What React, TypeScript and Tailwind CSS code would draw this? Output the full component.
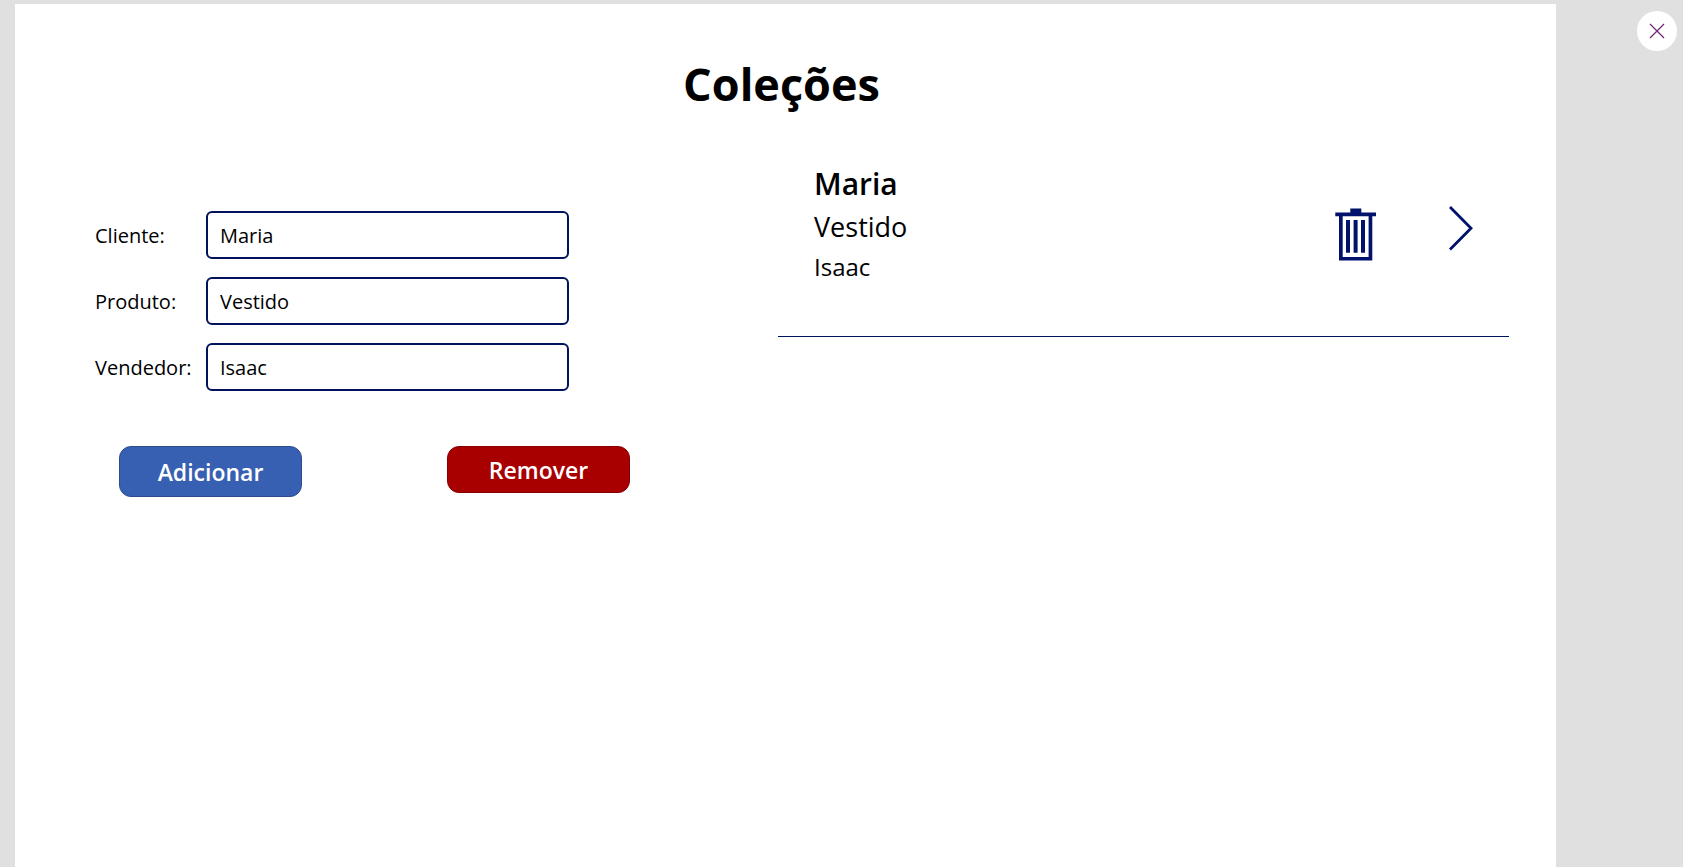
import { useState } from "react";

const fields = [
  { id: "cliente", label: "Cliente:", value: "Maria" },
  { id: "produto", label: "Produto:", value: "Vestido" },
  { id: "vendedor", label: "Vendedor:", value: "Isaac" },
];

const colecoes = [{ cliente: "Maria", produto: "Vestido", vendedor: "Isaac" }];

function TrashIcon() {
  return (
    <svg width="42" height="60" viewBox="0 0 42 60" fill="#00126b" aria-hidden="true">
      <path d="M15.3 4.6H26.3V8.4H41V12.2H37.3V56.6H4V12.2H0.3V8.4H15.3ZM7.7 12.2V53H33.6V12.2Z" fillRule="evenodd" />
      <path d="M11 16H15V48.8H11ZM18.6 16H22.6V48.8H18.6ZM26 16H30V48.8H26Z" />
    </svg>
  );
}

function ChevronIcon() {
  return (
    <svg width="24" height="60" viewBox="0 0 24 60" fill="none" stroke="#00126b" strokeWidth="2.8" aria-hidden="true">
      <path d="M1 3L22 24.3L1 45.6" />
    </svg>
  );
}

export default function App() {
  const [form, setForm] = useState<Record<string, string>>({
    cliente: fields[0].value,
    produto: fields[1].value,
    vendedor: fields[2].value,
  });

  return (
    <div className="flex min-h-screen bg-[#e0e0e0] pl-[15px] pt-1 font-['Open_Sans',sans-serif] text-black">
      <main className="flex-1 bg-white pt-[50px]">
        <h1 className="pr-2 text-center text-[45px] leading-[60px] font-bold">Coleções</h1>

        <div className="grid grid-cols-[763fr_731fr] pr-[47px] pt-[47px]">
          <form className="pl-20 pt-[50px]" onSubmit={(e) => e.preventDefault()}>
            <div className="flex flex-col gap-[18px]">
              {fields.map((f) => (
                <div key={f.id} className="flex items-center">
                  <label htmlFor={f.id} className="w-[111px] pt-[2px] text-[20px] leading-7">
                    {f.label}
                  </label>
                  <input
                    id={f.id}
                    type="text"
                    value={form[f.id]}
                    onChange={(e) => setForm({ ...form, [f.id]: e.target.value })}
                    className="h-12 w-[363px] rounded-md border-2 border-[#00125b] bg-white px-3 text-[20px] leading-7 outline-none"
                  />
                </div>
              ))}
            </div>
            <div className="mt-[55px] flex items-start gap-[145px] pl-6">
              <button type="submit" className="h-[51px] w-[183px] rounded-xl border border-[#2d4c8c] bg-[#3860b2] pt-[2px] text-[23px] font-semibold text-white">
                Adicionar
              </button>
              <button type="button" className="h-[47px] w-[183px] rounded-xl border border-[#860000] bg-[#a80000] pt-[2px] text-[23px] font-semibold text-white">
                Remover
              </button>
            </div>
          </form>

          <ul>
            {colecoes.map((c) => (
              <li key={c.cliente} className="flex items-start border-b border-[#00125b] pb-[49px] pl-9 pr-9">
                <div className="flex-1">
                  <p className="text-[30px] leading-[46px] font-semibold">{c.cliente}</p>
                  <p className="text-[27px] leading-10">{c.produto}</p>
                  <p className="text-[24px] leading-10">{c.vendedor}</p>
                </div>
                <div className="flex gap-[72px] pt-[43px]">
                  <button type="button" aria-label="Excluir">
                    <TrashIcon />
                  </button>
                  <button type="button" aria-label="Abrir">
                    <ChevronIcon />
                  </button>
                </div>
              </li>
            ))}
          </ul>
        </div>
      </main>

      <aside className="flex w-[127px] justify-end pr-[6px] pt-[7px]">
        <button type="button" aria-label="Fechar" className="flex size-10 items-center justify-center rounded-full bg-white">
          <svg width="16" height="16" viewBox="0 0 16 16" fill="none" stroke="#742774" strokeWidth="1.3" aria-hidden="true">
            <path d="M1 1L15 15M15 1L1 15" />
          </svg>
        </button>
      </aside>
    </div>
  );
}
